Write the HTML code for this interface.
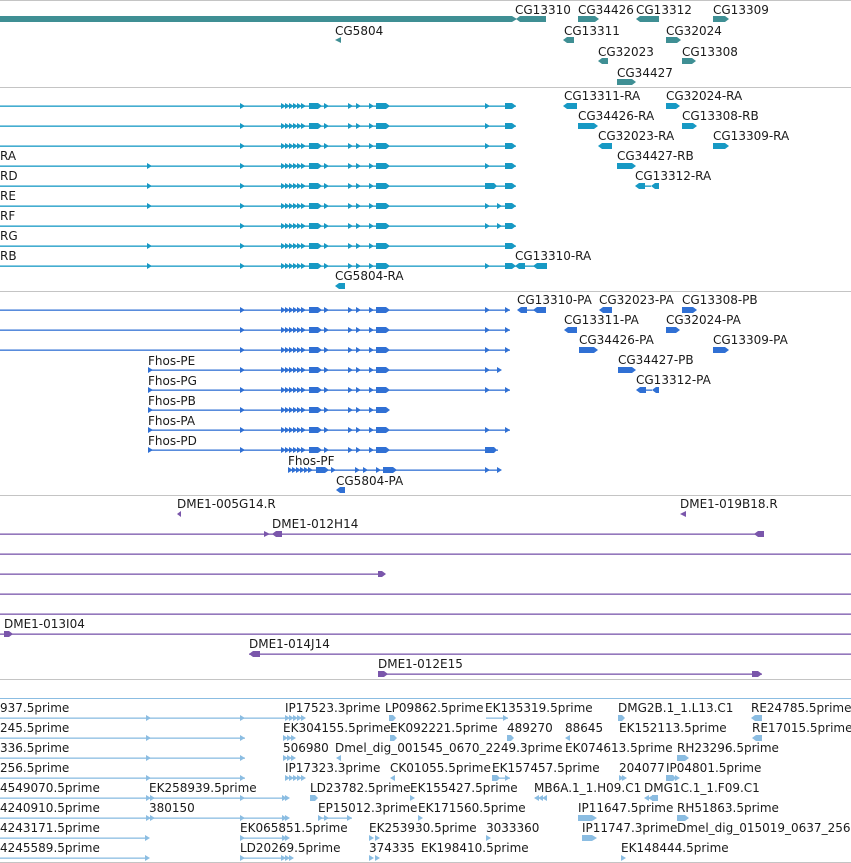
<!DOCTYPE html>
<html><head><meta charset="utf-8">
<style>
html,body{margin:0;padding:0;background:#fff;width:851px;height:863px;overflow:hidden}
svg{display:block}
text{font-family:"DejaVu Sans","Liberation Sans",sans-serif;font-size:12px;fill:#1a1a1a}
</style></head><body>
<svg width="851" height="863" viewBox="0 0 851 863" xmlns="http://www.w3.org/2000/svg">
<defs>
<polygon id="ar" points="0,-3 5,0 0,3"/>
<polygon id="al" points="5,-3 0,0 5,3"/>
<g id="core0">
 <use href="#ar" x="281"/><use href="#ar" x="285"/><use href="#ar" x="289"/><use href="#ar" x="293"/><use href="#ar" x="297"/><use href="#ar" x="301"/>
 <polygon points="309,-3 318,-3 322,0 318,3 309,3"/>
 <use href="#ar" x="324"/>
 <use href="#ar" x="348"/><use href="#ar" x="356"/>
 <use href="#ar" x="369"/>
 <polygon points="376,-3 386,-3 390,0 386,3 376,3"/>
</g>
<g id="core"><use href="#ar" x="240"/><use href="#core0"/></g>
</defs>

<g fill="#c4c4c4">
<rect x="0" y="0" width="851" height="1"/>
<rect x="0" y="87" width="851" height="1"/>
<rect x="0" y="291" width="851" height="1"/>
<rect x="0" y="495" width="851" height="1"/>
<rect x="0" y="679" width="851" height="1"/>
<rect x="0" y="862" width="851" height="1"/>
</g>
<rect x="0" y="698" width="851" height="1" fill="#8bbde2"/>

<g fill="#3f8f94">
<rect x="0" y="16" width="512" height="6"/>
<polygon points="512,16 517,19 512,22"/>
<polygon points="516,19 520,16 546,16 546,22 520,22"/>
<polygon points="578,16 595,16 599,19 595,22 578,22"/>
<polygon points="636,19 640,16 659,16 659,22 640,22"/>
<polygon points="713,16 725,16 729,19 725,22 713,22"/>
<polygon points="335,40 341,37 341,43"/>
<polygon points="563,40 567,37 574,37 574,43 567,43"/>
<polygon points="666,37 677,37 681,40 677,43 666,43"/>
<polygon points="598,61 602,58 608,58 608,64 602,64"/>
<polygon points="682,58 692,58 696,61 692,64 682,64"/>
<polygon points="617,79 632,79 636,82 632,85 617,85"/>
</g>
<text x="515" y="14">CG13310</text>
<text x="578" y="14">CG34426</text>
<text x="636" y="14">CG13312</text>
<text x="713" y="14">CG13309</text>
<text x="335" y="35">CG5804</text>
<text x="564" y="35">CG13311</text>
<text x="666" y="35">CG32024</text>
<text x="598" y="56">CG32023</text>
<text x="682" y="56">CG13308</text>
<text x="617" y="77">CG34427</text>

<g fill="#1799c4">
<rect x="0" y="105.5" width="516" height="1.3"/>
<rect x="0" y="125.5" width="516" height="1.3"/>
<rect x="0" y="145.5" width="516" height="1.3"/>
<rect x="0" y="165.5" width="516" height="1.3"/>
<rect x="0" y="185.5" width="516" height="1.3"/>
<rect x="0" y="205.5" width="516" height="1.3"/>
<rect x="0" y="225.5" width="516" height="1.3"/>
<rect x="0" y="245.5" width="516" height="1.3"/>
<rect x="0" y="265.5" width="516" height="1.3"/>
<use href="#core" y="106"/><use href="#core" y="126"/><use href="#core" y="146"/>
<use href="#core" y="166"/><use href="#core" y="186"/><use href="#core" y="206"/>
<use href="#core" y="226"/><use href="#core" y="246"/><use href="#core" y="266"/>
<use href="#ar" x="147" y="166"/><use href="#ar" x="147" y="186"/><use href="#ar" x="147" y="206"/><use href="#ar" x="147" y="246"/><use href="#ar" x="147" y="266"/>
<use href="#ar" x="485" y="106"/><use href="#ar" x="485" y="126"/><use href="#ar" x="485" y="146"/><use href="#ar" x="485" y="166"/><use href="#ar" x="485" y="206"/><use href="#ar" x="485" y="226"/><use href="#ar" x="485" y="266"/>
<use href="#ar" x="497" y="206"/><use href="#ar" x="497" y="226"/>
<polygon points="485,183 494,183 497,186 494,189 485,189"/>
<polygon points="505,103 512,103 516,106 512,109 505,109"/>
<polygon points="505,123 512,123 516,126 512,129 505,129"/>
<polygon points="505,143 512,143 516,146 512,149 505,149"/>
<polygon points="505,163 512,163 516,166 512,169 505,169"/>
<polygon points="505,183 512,183 516,186 512,189 505,189"/>
<polygon points="505,203 512,203 516,206 512,209 505,209"/>
<polygon points="505,223 512,223 516,226 512,229 505,229"/>
<polygon points="505,243 512,243 516,246 512,249 505,249"/>
<polygon points="505,263 512,263 516,266 512,269 505,269"/>
<polygon points="563,106 567,103 577,103 577,109 567,109"/>
<polygon points="666,103 676,103 680,106 676,109 666,109"/>
<polygon points="578,123 594,123 598,126 594,129 578,129"/>
<polygon points="682,123 693,123 697,126 693,129 682,129"/>
<polygon points="598,146 602,143 612,143 612,149 602,149"/>
<polygon points="713,143 725,143 729,146 725,149 713,149"/>
<polygon points="617,163 632,163 636,166 632,169 617,169"/>
<polygon points="635,186 639,183 645,183 645,189 639,189"/>
<rect x="645" y="185.5" width="6" height="1.3"/>
<polygon points="651,186 655,183 659,183 659,189 655,189"/>
<polygon points="515,266 519,263 525,263 525,269 519,269"/>
<rect x="525" y="265.5" width="10" height="1.3"/>
<polygon points="533,266 537,263 547,263 547,269 537,269"/>
<polygon points="335,286 339,283 345,283 345,289 339,289"/>
</g>
<text x="0" y="160">RA</text><text x="0" y="180">RD</text><text x="0" y="200">RE</text>
<text x="0" y="220">RF</text><text x="0" y="240">RG</text><text x="0" y="260">RB</text>
<text x="564" y="100">CG13311-RA</text><text x="666" y="100">CG32024-RA</text>
<text x="578" y="120">CG34426-RA</text><text x="682" y="120">CG13308-RB</text>
<text x="598" y="140">CG32023-RA</text><text x="713" y="140">CG13309-RA</text>
<text x="617" y="160">CG34427-RB</text>
<text x="635" y="180">CG13312-RA</text>
<text x="515" y="260">CG13310-RA</text>
<text x="335" y="280">CG5804-RA</text>

<g fill="#3070d4">
<rect x="0" y="309.5" width="510" height="1.3"/>
<rect x="0" y="329.5" width="510" height="1.3"/>
<rect x="0" y="349.5" width="510" height="1.3"/>
<rect x="148" y="369.5" width="352" height="1.3"/>
<rect x="148" y="389.5" width="362" height="1.3"/>
<rect x="148" y="409.5" width="240" height="1.3"/>
<rect x="148" y="429.5" width="362" height="1.3"/>
<rect x="148" y="449.5" width="350" height="1.3"/>
<rect x="288" y="469.5" width="212" height="1.3"/>
<use href="#core" y="310"/><use href="#core" y="330"/><use href="#core" y="350"/>
<use href="#core" y="370"/><use href="#core" y="390"/><use href="#core" y="410"/>
<use href="#core" y="430"/><use href="#core" y="450"/>
<use href="#core0" x="7" y="470"/>
<use href="#ar" x="148" y="370"/><use href="#ar" x="148" y="390"/><use href="#ar" x="148" y="410"/><use href="#ar" x="148" y="430"/><use href="#ar" x="148" y="450"/>
<use href="#ar" x="485" y="310"/><use href="#ar" x="505" y="310"/>
<use href="#ar" x="485" y="330"/><use href="#ar" x="505" y="330"/>
<use href="#ar" x="485" y="350"/><use href="#ar" x="505" y="350"/>
<use href="#ar" x="485" y="370"/><use href="#ar" x="497" y="370"/>
<use href="#ar" x="485" y="390"/><use href="#ar" x="505" y="390"/>
<use href="#ar" x="485" y="430"/><use href="#ar" x="505" y="430"/>
<polygon points="485,447 494,447 497,450 494,453 485,453"/>
<use href="#ar" x="485" y="470"/><use href="#ar" x="497" y="470"/>
<polygon points="517,310 521,307 527,307 527,313 521,313"/>
<rect x="527" y="309.5" width="8" height="1.3"/>
<polygon points="533,310 537,307 546,307 546,313 537,313"/>
<polygon points="599,310 603,307 612,307 612,313 603,313"/>
<polygon points="682,307 693,307 697,310 693,313 682,313"/>
<polygon points="564,330 568,327 577,327 577,333 568,333"/>
<polygon points="666,327 676,327 680,330 676,333 666,333"/>
<polygon points="579,347 594,347 598,350 594,353 579,353"/>
<polygon points="713,347 725,347 729,350 725,353 713,353"/>
<polygon points="618,367 632,367 636,370 632,373 618,373"/>
<polygon points="636,390 640,387 646,387 646,393 640,393"/>
<rect x="646" y="389.5" width="6" height="1.3"/>
<polygon points="652,390 656,387 659,387 659,393 656,393"/>
<polygon points="336,490 340,487 345,487 345,493 340,493"/>
</g>
<text x="148" y="365">Fhos-PE</text><text x="148" y="385">Fhos-PG</text>
<text x="148" y="405">Fhos-PB</text><text x="148" y="425">Fhos-PA</text>
<text x="148" y="445">Fhos-PD</text><text x="288" y="465">Fhos-PF</text>
<text x="336" y="485">CG5804-PA</text>
<text x="517" y="304">CG13310-PA</text><text x="599" y="304">CG32023-PA</text><text x="682" y="304">CG13308-PB</text>
<text x="564" y="324">CG13311-PA</text><text x="666" y="324">CG32024-PA</text>
<text x="579" y="344">CG34426-PA</text><text x="713" y="344">CG13309-PA</text>
<text x="618" y="364">CG34427-PB</text>
<text x="636" y="384">CG13312-PA</text>

<g fill="#7a56ab">
<polygon points="177,514 181,511 181,517"/>
<polygon points="680,514 686,511 686,517"/>
<rect x="0" y="533.5" width="764" height="1.3"/>
<polygon points="264,531 270,534 264,537"/>
<polygon points="272,534 276,531 282,531 282,537 276,537"/>
<polygon points="754,534 758,531 764,531 764,537 758,537"/>
<rect x="0" y="553.5" width="851" height="1.3"/>
<rect x="0" y="573.5" width="385" height="1.3"/>
<polygon points="378,571 382,571 386,574 382,577 378,577"/>
<rect x="0" y="593.5" width="851" height="1.3"/>
<rect x="0" y="613.5" width="851" height="1.3"/>
<rect x="0" y="633.5" width="851" height="1.3"/>
<polygon points="4,631 9,631 13,634 9,637 4,637"/>
<rect x="249" y="653.5" width="602" height="1.3"/>
<polygon points="249,654 253,651 260,651 260,657 253,657"/>
<rect x="378" y="673.5" width="384" height="1.3"/>
<polygon points="378,671 384,671 388,674 384,677 378,677"/>
<polygon points="752,671 758,671 762,674 758,677 752,677"/>
</g>
<text x="177" y="508">DME1-005G14.R</text>
<text x="680" y="508">DME1-019B18.R</text>
<text x="272" y="528">DME1-012H14</text>
<text x="4" y="628">DME1-013I04</text>
<text x="249" y="648">DME1-014J14</text>
<text x="378" y="668">DME1-012E15</text>

<g fill="#8bbde2">
<rect x="0" y="717.5" width="290" height="1.3"/>
<use href="#ar" x="146" y="718"/><use href="#ar" x="240" y="718"/>
<use href="#ar" x="285" y="718"/><use href="#ar" x="289" y="718"/><use href="#ar" x="293" y="718"/><use href="#ar" x="297" y="718"/><use href="#ar" x="301" y="718"/>
<polygon points="389,715 393,715 396,718 393,721 389,721"/>
<rect x="486" y="717.5" width="22" height="1.3"/><use href="#ar" x="503" y="718"/>
<polygon points="618,715 622,715 625,718 622,721 618,721"/>
<polygon points="751,718 755,715 762,715 762,721 755,721"/>

<rect x="0" y="737.5" width="245" height="1.3"/><use href="#ar" x="146" y="738"/><use href="#ar" x="240" y="738"/>
<use href="#ar" x="283" y="738"/><use href="#ar" x="287" y="738"/><use href="#ar" x="291" y="738"/>
<polygon points="390,735 394,735 397,738 394,741 390,741"/>
<polygon points="507,735 511,735 514,738 511,741 507,741"/>
<use href="#al" x="565" y="738"/>
<polygon points="752,738 756,735 762,735 762,741 756,741"/>

<rect x="0" y="757.5" width="245" height="1.3"/><use href="#ar" x="146" y="758"/><use href="#ar" x="240" y="758"/>
<use href="#ar" x="283" y="758"/><use href="#ar" x="287" y="758"/><use href="#ar" x="291" y="758"/>
<use href="#al" x="336" y="758"/>
<polygon points="677,755 685,755 689,758 685,761 677,761"/>

<rect x="0" y="777.5" width="245" height="1.3"/><use href="#ar" x="146" y="778"/><use href="#ar" x="240" y="778"/>
<use href="#ar" x="285" y="778"/><use href="#ar" x="289" y="778"/><use href="#ar" x="293" y="778"/><use href="#ar" x="297" y="778"/><use href="#ar" x="301" y="778"/>
<use href="#al" x="390" y="778"/>
<rect x="492" y="777.5" width="18" height="1.3"/><polygon points="492,775 497,775 500,778 497,781 492,781"/><use href="#ar" x="505" y="778"/>
<use href="#ar" x="619" y="778"/><use href="#ar" x="622" y="778"/>
<polygon points="666,775 673,775 676,778 673,781 666,781"/><use href="#ar" x="675" y="778"/>

<rect x="0" y="797.5" width="288" height="1.3"/><use href="#ar" x="146" y="798"/><use href="#ar" x="150" y="798"/><use href="#ar" x="240" y="798"/>
<use href="#ar" x="282" y="798"/><use href="#ar" x="285" y="798"/>
<polygon points="310,795 315,795 318,798 315,801 310,801"/>
<use href="#ar" x="410" y="798"/>
<use href="#al" x="534" y="798"/><use href="#al" x="538" y="798"/><use href="#al" x="542" y="798"/>
<use href="#al" x="644" y="798"/><use href="#al" x="648" y="798"/><rect x="648" y="797.5" width="8" height="1.3"/><rect x="652" y="795" width="6" height="6"/>

<rect x="0" y="817.5" width="288" height="1.3"/><use href="#ar" x="146" y="818"/><use href="#ar" x="150" y="818"/><use href="#ar" x="240" y="818"/>
<use href="#ar" x="282" y="818"/><use href="#ar" x="285" y="818"/>
<rect x="318" y="817.5" width="34" height="1.3"/><use href="#ar" x="318" y="818"/><use href="#ar" x="324" y="818"/><use href="#ar" x="347" y="818"/>
<use href="#ar" x="418" y="818"/>
<polygon points="578,815 592,815 597,818 592,821 578,821"/>
<polygon points="677,815 685,815 689,818 685,821 677,821"/>

<rect x="0" y="837.5" width="148" height="1.3"/><use href="#ar" x="145" y="838"/>
<rect x="240" y="837.5" width="48" height="1.3"/><use href="#ar" x="240" y="838"/><use href="#ar" x="282" y="838"/><use href="#ar" x="285" y="838"/>
<use href="#ar" x="369" y="838"/><use href="#ar" x="375" y="838"/>
<use href="#ar" x="486" y="838"/>
<polygon points="582,835 592,835 597,838 592,841 582,841"/>

<rect x="0" y="857.5" width="148" height="1.3"/><use href="#ar" x="145" y="858"/>
<rect x="240" y="857.5" width="53" height="1.3"/><use href="#ar" x="240" y="858"/><use href="#ar" x="281" y="858"/><use href="#ar" x="285" y="858"/><use href="#ar" x="289" y="858"/>
<use href="#ar" x="369" y="858"/><use href="#ar" x="375" y="858"/>
<use href="#ar" x="621" y="858"/>
</g>
<text x="0" y="712">937.5prime</text><text x="285" y="712">IP17523.3prime</text><text x="385" y="712">LP09862.5prime</text><text x="485" y="712">EK135319.5prime</text><text x="618" y="712">DMG2B.1_1.L13.C1</text><text x="751" y="712">RE24785.5prime</text>
<text x="0" y="732">245.5prime</text><text x="283" y="732">EK304155.5prime</text><text x="390" y="732">EK092221.5prime</text><text x="507" y="732">489270</text><text x="565" y="732">88645</text><text x="619" y="732">EK152113.5prime</text><text x="752" y="732">RE17015.5prime</text>
<text x="0" y="752">336.5prime</text><text x="283" y="752">506980</text><text x="335" y="752">Dmel_dig_001545_0670_2249.3prime</text><text x="565" y="752">EK074613.5prime</text><text x="677" y="752">RH23296.5prime</text>
<text x="0" y="772">256.5prime</text><text x="285" y="772">IP17323.3prime</text><text x="390" y="772">CK01055.5prime</text><text x="492" y="772">EK157457.5prime</text><text x="619" y="772">204077</text><text x="666" y="772">IP04801.5prime</text>
<text x="0" y="792">4549070.5prime</text><text x="149" y="792">EK258939.5prime</text><text x="310" y="792">LD23782.5prime</text><text x="410" y="792">EK155427.5prime</text><text x="534" y="792">MB6A.1_1.H09.C1</text><text x="644" y="792">DMG1C.1_1.F09.C1</text>
<text x="0" y="812">4240910.5prime</text><text x="149" y="812">380150</text><text x="318" y="812">EP15012.3prime</text><text x="418" y="812">EK171560.5prime</text><text x="578" y="812">IP11647.5prime</text><text x="677" y="812">RH51863.5prime</text>
<text x="0" y="832">4243171.5prime</text><text x="240" y="832">EK065851.5prime</text><text x="369" y="832">EK253930.5prime</text><text x="486" y="832">3033360</text><text x="582" y="832">IP11747.3prime</text><text x="677" y="832">Dmel_dig_015019_0637_256</text>
<text x="0" y="852">4245589.5prime</text><text x="240" y="852">LD20269.5prime</text><text x="369" y="852">374335</text><text x="421" y="852">EK198410.5prime</text><text x="621" y="852">EK148444.5prime</text>
</svg>
</body></html>
